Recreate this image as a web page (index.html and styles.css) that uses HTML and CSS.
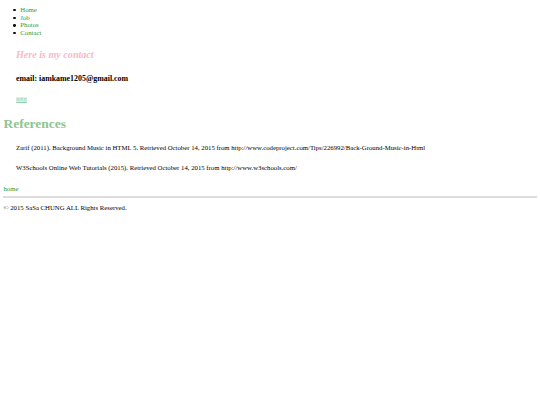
FILE: index.html
```html
<!DOCTYPE html>
<html lang="zh-Hant">
<head>
<meta charset="utf-8">
<title>Contact</title>
<link rel="stylesheet" href="styles.css">
</head>
<body class="page">
  <main class="main">
    <ul class="nav">
      <li class="nav-item"><a class="nav-link" href="#">Home</a></li>
      <li class="nav-item"><a class="nav-link" href="#">Job</a></li>
      <li class="nav-item"><a class="nav-link" href="#">Photos</a></li>
      <li class="nav-item"><a class="nav-link" href="#">Contact</a></li>
    </ul>
    <section class="contact">
      <h2 class="contact-title">Here is my contact</h2>
      <h3 class="contact-email">email: iamkame1205@gmail.com</h3>
      <p class="contact-link-row"><a class="music-link" href="#">回首頁</a></p>
    </section>
    <h1 class="refs-title">References</h1>
    <p class="ref">Zarif (2011). Background Music in HTML 5. Retrieved October 14, 2015 from http://www.codeproject.com/Tips/226992/Back-Ground-Music-in-Html</p>
    <p class="ref">W3Schools Online Web Tutorials (2015). Retrieved October 14, 2015 from http://www.w3schools.com/</p>
    <a class="home-link" href="#">home</a>
  </main>
  <footer class="footer">
    <hr class="rule">
    <p class="copy">© 2015 SaSa CHUNG ALL Rights Reserved.</p>
  </footer>
</body>
</html>
```
FILE: styles.css
```css
.page {
  margin: 3.4px;
  font-family: "Liberation Serif", "Noto Sans CJK TC", serif;
  font-size: 6.75px;
  line-height: 7.7px;
  color: #000;
  background: #fff;
}
.main {
  display: flex;
  flex-direction: column;
  align-items: flex-start;
  gap: 12.6px;
}
.nav {
  margin: 2.7px 0 0;
  padding-left: 16.9px;
  list-style: none;
}
.nav-item::before {
  content: "";
  display: inline-block;
  width: 2.3px;
  height: 2.3px;
  border-radius: 50%;
  background: #111;
  margin-left: -6.9px;
  margin-right: 4.6px;
  vertical-align: 0.9px;
}
.nav-link {
  color: #2e9a2e;
  text-decoration: none;
}
.contact {
  display: flex;
  flex-direction: column;
  gap: 12.6px;
  padding-left: 12.6px;
}
.contact-title {
  margin: 0;
  font-size: 10.1px;
  line-height: 11.6px;
  font-style: italic;
  font-weight: bold;
  color: #f6b9ca;
}
.contact-email {
  margin: 0;
  font-size: 7.9px;
  line-height: 9.1px;
  font-weight: bold;
}
.contact-link-row {
  margin: 0;
}
.music-link {
  color: #8fcfb0;
  font-size: 3.5px;
  line-height: 6px;
  display: inline-block;
  padding: 0 0.3px;
  background: #e3f3ea;
  text-decoration: underline;
}
.refs-title {
  margin: 0;
  font-size: 13.5px;
  line-height: 15.5px;
  font-weight: bold;
  color: #8fc48f;
}
.ref {
  margin: 0;
  padding-left: 12.6px;
}
.home-link {
  color: #2e9a2e;
  text-decoration: none;
}
.footer {
  display: flex;
  flex-direction: column;
  gap: 6px;
  margin-top: 4px;
}
.rule {
  margin: 0;
  border: none;
  height: 1.6px;
  background: #dcdcdc;
}
.copy {
  margin: 0;
}
```
